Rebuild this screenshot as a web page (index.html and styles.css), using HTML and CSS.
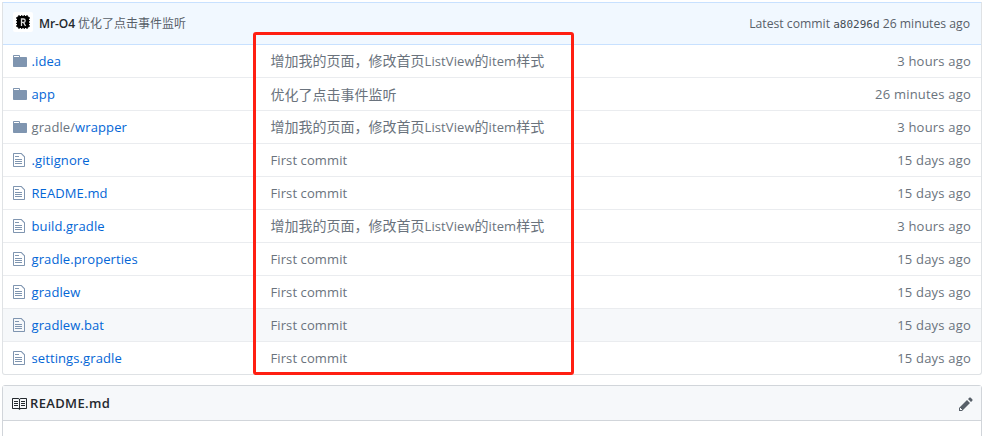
FILE: index.html
```html
<!DOCTYPE html>
<html lang="zh-CN">
<head>
<meta charset="utf-8">
<title>Repository files</title>
<link rel="stylesheet" href="styles.css">
</head>
<body>
<svg class="defs" aria-hidden="true">
  <symbol id="folder" viewBox="0 0 14 16"><path fill-rule="evenodd" d="M13 4H7V3c0-.66-.31-1-1-1H1c-.55 0-1 .45-1 1v10c0 .55.45 1 1 1h12c.55 0 1-.45 1-1V5c0-.55-.45-1-1-1zM6 4H1V3h5v1z"/></symbol>
  <symbol id="file" viewBox="0 0 12 16"><path fill-rule="evenodd" d="M6 5H2V4h4v1zM2 8h7V7H2v1zm0 2h7V9H2v1zm0 2h7v-1H2v1zm10-7.500V14c0 .55-.45 1-1 1H1c-.55 0-1-.45-1-1V2c0-.55.45-1 1-1h7.500L12 4.500zM11 5L8 2H1v12h10V5z"/></symbol>
</svg>
<main class="page">
  <section class="files">
    <header class="commit">
      <svg class="avatar" viewBox="0 0 20 20"><rect width="20" height="20" rx="2" fill="#fff"/><path d="M6 3v14M8.700 3v14M11.300 3v14M14 3v14M3 6h14M3 8.700h14M3 11.300h14M3 14h14" stroke="#222" stroke-width="1.300"/><rect x="4" y="4" width="12" height="12" rx="2" fill="#000"/><path d="M8.500 14V7h2q1.700 0 1.700 1.700t-1.700 1.700h-2m2 0 2 3.600" fill="none" stroke="#ddd" stroke-width="1.300"/></svg>
      <b class="author">Mr-O4</b>
      <span class="title">优化了点击事件监听</span>
      <span class="latest">Latest commit <code>a80296d</code> <span>26 minutes ago</span></span>
    </header>
    <div class="row"><svg class="icon folder"><use href="#folder"/></svg><a class="name">.idea</a><span class="message"><i>增加我的页面，修改首页</i><span class="word">ListView</span><i>的</i><span class="word">item</span><i>样式</i></span><time>3 hours ago</time></div>
    <div class="row"><svg class="icon folder"><use href="#folder"/></svg><a class="name">app</a><span class="message"><i>优化了点击事件监听</i></span><time>26 minutes ago</time></div>
    <div class="row"><svg class="icon folder"><use href="#folder"/></svg><a class="name"><span class="parent">gradle/</span>wrapper</a><span class="message"><i>增加我的页面，修改首页</i><span class="word">ListView</span><i>的</i><span class="word">item</span><i>样式</i></span><time>3 hours ago</time></div>
    <div class="row"><svg class="icon file"><use href="#file"/></svg><a class="name">.gitignore</a><span class="message">First commit</span><time>15 days ago</time></div>
    <div class="row"><svg class="icon file"><use href="#file"/></svg><a class="name">README.md</a><span class="message">First commit</span><time>15 days ago</time></div>
    <div class="row"><svg class="icon file"><use href="#file"/></svg><a class="name">build.gradle</a><span class="message"><i>增加我的页面，修改首页</i><span class="word">ListView</span><i>的</i><span class="word">item</span><i>样式</i></span><time>3 hours ago</time></div>
    <div class="row"><svg class="icon file"><use href="#file"/></svg><a class="name">gradle.properties</a><span class="message">First commit</span><time>15 days ago</time></div>
    <div class="row"><svg class="icon file"><use href="#file"/></svg><a class="name">gradlew</a><span class="message">First commit</span><time>15 days ago</time></div>
    <div class="row active"><svg class="icon file"><use href="#file"/></svg><a class="name">gradlew.bat</a><span class="message">First commit</span><time>15 days ago</time></div>
    <div class="row"><svg class="icon file"><use href="#file"/></svg><a class="name">settings.gradle</a><span class="message">First commit</span><time>15 days ago</time></div>
  </section>
  <section class="readme">
    <header class="readme-head">
      <svg class="book" viewBox="0 0 16 16"><path fill-rule="evenodd" d="M3 5h4v1H3V5zm0 3h4V7H3v1zm0 2h4V9H3v1zm11-5h-4v1h4V5zm0 2h-4v1h4V7zm0 2h-4v1h4V9zm2-6v9c0 .55-.45 1-1 1H9.500l-1 1-1-1H2c-.55 0-1-.45-1-1V3c0-.55.45-1 1-1h5.500l1 1 1-1H15c.55 0 1 .45 1 1zm-8 .5L7.500 3H2v9h6V3.500zm7-.5H9.500l-.5.500V12h6V3z"/></svg>
      <h3>README.md</h3>
      <svg class="pencil" viewBox="0 0 14 16"><path fill-rule="evenodd" d="M0 12v3h3l8-8-3-3-8 8zm3 2H1v-2h1v1h1v1zm10.300-9.300L12 6 9 3l1.300-1.300a.996.996 0 0 1 1.410 0l1.590 1.590c.39.390.39 1.020 0 1.410z"/></svg>
    </header>
  </section>
  <div class="highlight"></div>
</main>
</body>
</html>
```
FILE: styles.css
```css
* { box-sizing: border-box; }
body {
  margin: 0;
  background: #fff;
  color: #6a737d;
  font: 13px/20px "Open Sans", "Noto Sans CJK SC", sans-serif;
  overflow: hidden;
}
.defs { display: none; }
.page { position: relative; height: 436px; padding: 2px 8px 0 2px; overflow: hidden; }
.files { border: 1px solid #dfe2e5; border-top: 0; border-radius: 0 0 3px 3px; overflow: hidden; }
.commit {
  display: flex;
  align-items: center;
  height: 43px;
  margin: 0 -1px;
  padding: 0 11px 0 11px;
  background: #f1f8ff;
  border: 1px solid #c8e1ff;
  border-left-color: #dfe2e5;
  color: #586069;
}
.avatar { width: 20px; height: 20px; margin: -3px 6px 0 -1px; }
.author { color: #24292e; font-size: 12px; font-weight: 600; letter-spacing: -0.1px; margin: 1px 3px 0 0; }
.title { font-size: 12px; margin-top: 1px; }
.latest { margin: 1px 0 0 auto; font-size: 12.200px; white-space: nowrap; }
code { font: 11px "DejaVu Sans Mono", monospace; color: #444d56; }
.row {
  display: flex;
  align-items: center;
  height: 33px;
  padding: 0 10px 0 10px;
  border-bottom: 1px solid #eaecef;
}
.row:last-child { height: 32px; border-bottom: 0; }
.active { background: #f6f8fa; }
.icon { flex: none; height: 16px; fill: #7f95b0; }
.folder { width: 14px; margin-right: 4.500px; }
.file { width: 12px; margin-right: 6.500px; }
.name { width: 239px; color: #0366d6; white-space: nowrap; letter-spacing: 0.100px; }
.parent { color: #6a737d; }
.message { display: flex; letter-spacing: 0.100px; }
.message i { font: 14px/18px "Noto Sans CJK SC", sans-serif; letter-spacing: 0; }
time { margin-left: auto; letter-spacing: 0.200px; }
.readme { margin-top: 10px; height: 60px; border: 1px solid #d1d5da; border-radius: 3px 3px 0 0; }
.readme-head {
  display: flex;
  align-items: center;
  height: 35px;
  padding: 0 8px 0 8px;
  background: #f6f8fa;
  border-bottom: 1px solid #d1d5da;
  color: #24292e;
}
.book { width: 16px; height: 16px; margin: 2px 3px 0 0; fill: #24292e; }
h3 { margin: 0; font-size: 13px; font-weight: 600; letter-spacing: 0.350px; }
.pencil { width: 14px; height: 16px; margin: 1px 0 0 auto; fill: #586069; }
.highlight {
  position: absolute;
  left: 253px;
  top: 32px;
  width: 321px;
  height: 343px;
  border: 3px solid #ff1f12;
  border-radius: 3px;
}
```
